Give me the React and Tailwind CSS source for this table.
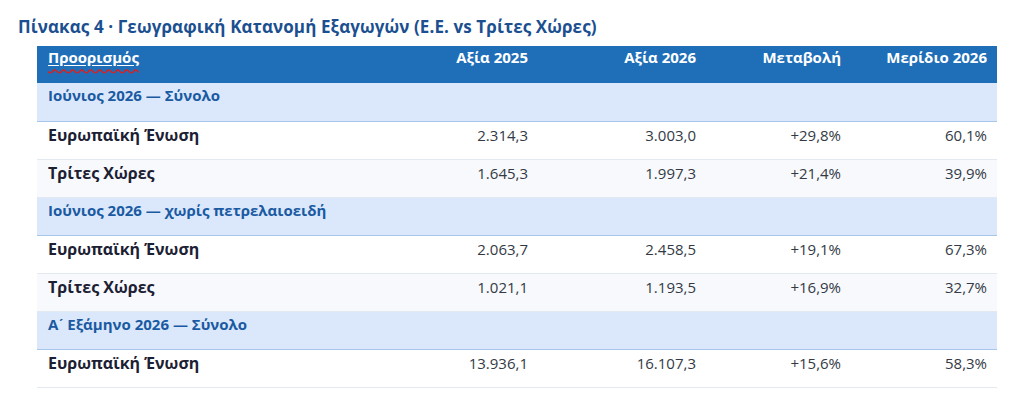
const rows = [
  { group: 'Ιούνιος 2026 — Σύνολο' },
  { name: 'Ευρωπαϊκή Ένωση', v25: '2.314,3', v26: '3.003,0', chg: '+29,8%', share: '60,1%' },
  { name: 'Τρίτες Χώρες', v25: '1.645,3', v26: '1.997,3', chg: '+21,4%', share: '39,9%', alt: true },
  { group: 'Ιούνιος 2026 — χωρίς πετρελαιοειδή' },
  { name: 'Ευρωπαϊκή Ένωση', v25: '2.063,7', v26: '2.458,5', chg: '+19,1%', share: '67,3%' },
  { name: 'Τρίτες Χώρες', v25: '1.021,1', v26: '1.193,5', chg: '+16,9%', share: '32,7%', alt: true },
  { group: 'Α\u0374 Εξάμηνο 2026 — Σύνολο' },
  { name: 'Ευρωπαϊκή Ένωση', v25: '13.936,1', v26: '16.107,3', chg: '+15,6%', share: '58,3%' },
]

export default function App() {
  return (
    <div className="w-[1024px] h-[417px] bg-white font-['Open_Sans',sans-serif] overflow-hidden">
      <h2 className="pl-[18px] pt-[16px] h-[46px] text-[17px] leading-[22px] font-bold text-[#1b4f8f] tracking-[0.1px]">
        Πίνακας 4 · Γεωγραφική Κατανομή Εξαγωγών (Ε.Ε. vs Τρίτες Χώρες)
      </h2>
      <table className="ml-[37px] w-[960px] table-fixed border-collapse text-[15px] leading-[20px]">
        <colgroup>
          <col className="w-[355px]" />
          <col className="w-[146px]" />
          <col className="w-[168px]" />
          <col className="w-[145px]" />
          <col className="w-[146px]" />
        </colgroup>
        <thead>
          <tr className="bg-[#1f6fb8] text-white h-[37px]">
            <th className="text-left align-top font-bold pl-[11px] pt-[1px] whitespace-nowrap">
              <span className="underline decoration-white underline-offset-2">
                <span className="underline decoration-wavy decoration-[#d92020] underline-offset-[5px]">Προορισμός</span>
              </span>
            </th>
            <th className="text-right align-top font-bold pr-[10px] pt-[1px] whitespace-nowrap">Αξία 2025</th>
            <th className="text-right align-top font-bold pr-[10px] pt-[1px] whitespace-nowrap">Αξία 2026</th>
            <th className="text-right align-top font-bold pr-[10px] pt-[1px] whitespace-nowrap">Μεταβολή</th>
            <th className="text-right align-top font-bold pr-[10px] pt-[1px] whitespace-nowrap">Μερίδιο 2026</th>
          </tr>
        </thead>
        <tbody>
          {rows.map((r, i) =>
            r.group ? (
              <tr key={i} className="bg-[#dbe8fb] h-[38px] border-b border-[#a8c6ea]">
                <td colSpan={5} className="align-top pl-[11px] pt-[2px] font-bold text-[#1a5aa2]">
                  {r.group}
                </td>
              </tr>
            ) : (
              <tr key={i} className={`h-[38px] border-b border-[#e3e9f1] ${r.alt ? 'bg-[#f7f9fc]' : 'bg-white'}`}>
                <td className="align-top pl-[11px] pt-[3px] font-bold text-[#1b2033] text-[16px]">{r.name}</td>
                <td className="align-top text-right pr-[10px] pt-[3px] text-[#333a45]">{r.v25}</td>
                <td className="align-top text-right pr-[10px] pt-[3px] text-[#333a45]">{r.v26}</td>
                <td className="align-top text-right pr-[10px] pt-[3px] text-[#333a45]">{r.chg}</td>
                <td className="align-top text-right pr-[10px] pt-[3px] text-[#333a45]">{r.share}</td>
              </tr>
            )
          )}
        </tbody>
      </table>
    </div>
  )
}
